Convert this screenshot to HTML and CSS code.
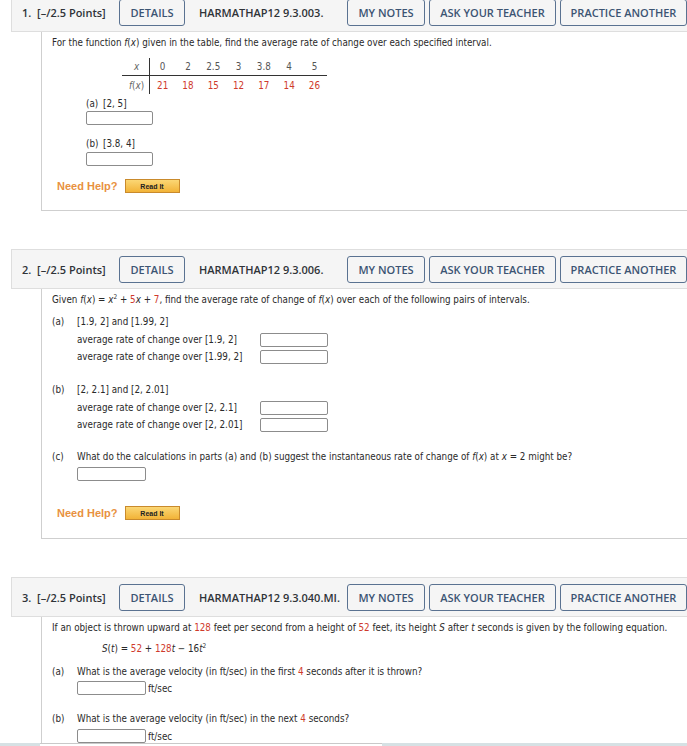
FILE: index.html
```html
<!DOCTYPE html>
<html lang="en">
<head>
<meta charset="utf-8">
<title>Questions</title>
<link rel="stylesheet" href="styles.css">
</head>
<body>
<div class="page">

<section class="q q1">
  <div class="qhead">
    <span class="qnum">1.&nbsp; [–/2.5 Points]</span>
    <span class="btn b-details">DETAILS</span>
    <span class="qid">HARMATHAP12 9.3.003.</span>
    <span class="actions">
      <span class="btn b-notes">MY NOTES</span>
      <span class="btn b-wide">ASK YOUR TEACHER</span>
      <span class="btn b-wide">PRACTICE ANOTHER</span>
    </span>
  </div>
  <div class="qbody qb1">
    <p class="line">For the function <i>f</i>(<i>x</i>) given in the table, find the average rate of change over each specified interval.</p>
    <div class="ftable">
      <div class="th"><i>x</i></div>
      <div class="td">0</div><div class="td">2</div><div class="td">2.5</div><div class="td">3</div><div class="td">3.8</div><div class="td">4</div><div class="td">5</div>
      <div class="th th2"><span><i>f</i>(<i>x</i>)</span></div>
      <div class="td red">21</div><div class="td red">18</div><div class="td red">15</div><div class="td red">12</div><div class="td red">17</div><div class="td red">14</div><div class="td red">26</div>
    </div>
    <div class="line part p1a"><span class="lbl lbl-s">(a)</span><span class="ptxt">[2, 5]</span></div>
    <input class="ans a1" type="text">
    <div class="line part p1b"><span class="lbl lbl-s">(b)</span><span class="ptxt">[3.8, 4]</span></div>
    <input class="ans a1 a1b" type="text">
    <div class="help h1"><span class="need">Need Help?</span><span class="readit">Read It</span></div>
  </div>
</section>

<section class="q q2">
  <div class="qhead">
    <span class="qnum">2.&nbsp; [–/2.5 Points]</span>
    <span class="btn b-details">DETAILS</span>
    <span class="qid">HARMATHAP12 9.3.006.</span>
    <span class="actions">
      <span class="btn b-notes">MY NOTES</span>
      <span class="btn b-wide">ASK YOUR TEACHER</span>
      <span class="btn b-wide">PRACTICE ANOTHER</span>
    </span>
  </div>
  <div class="qbody qb2">
    <p class="line">Given <i>f</i>(<i>x</i>) = <i>x</i><sup>2</sup> + <span class="red">5</span><i>x</i> + <span class="red">7</span>, find the average rate of change of <i>f</i>(<i>x</i>) over each of the following pairs of intervals.</p>
    <div class="line part p2a"><span class="lbl">(a)</span><span class="ptxt">[1.9, 2] and [1.99, 2]</span></div>
    <div class="rows r2a">
      <div class="row"><span class="rtxt">average rate of change over [1.9, 2]</span><input class="ans a2" type="text"></div>
      <div class="row"><span class="rtxt">average rate of change over [1.99, 2]</span><input class="ans a2" type="text"></div>
    </div>
    <div class="line part p2b"><span class="lbl">(b)</span><span class="ptxt">[2, 2.1] and [2, 2.01]</span></div>
    <div class="rows r2b">
      <div class="row"><span class="rtxt">average rate of change over [2, 2.1]</span><input class="ans a2" type="text"></div>
      <div class="row"><span class="rtxt">average rate of change over [2, 2.01]</span><input class="ans a2" type="text"></div>
    </div>
    <div class="line part p2c"><span class="lbl">(c)</span><span class="ptxt">What do the calculations in parts (a) and (b) suggest the instantaneous rate of change of <i>f</i>(<i>x</i>) at <i>x</i> = 2 might be?</span></div>
    <input class="ans a3 a2c" type="text">
    <div class="help h2"><span class="need">Need Help?</span><span class="readit">Read It</span></div>
  </div>
</section>

<section class="q q3">
  <div class="qhead">
    <span class="qnum">3.&nbsp; [–/2.5 Points]</span>
    <span class="btn b-details">DETAILS</span>
    <span class="qid">HARMATHAP12 9.3.040.MI.</span>
    <span class="actions">
      <span class="btn b-notes">MY NOTES</span>
      <span class="btn b-wide">ASK YOUR TEACHER</span>
      <span class="btn b-wide">PRACTICE ANOTHER</span>
    </span>
  </div>
  <div class="qbody qb3">
    <p class="line">If an object is thrown upward at <span class="red">128</span> feet per second from a height of <span class="red">52</span> feet, its height <i>S</i> after <i>t</i> seconds is given by the following equation.</p>
    <p class="line eq"><i>S</i>(<i>t</i>) = <span class="red">52</span> + <span class="red">128</span><i>t</i> − 16<i>t</i><sup>2</sup></p>
    <div class="line part p3a"><span class="lbl">(a)</span><span class="ptxt">What is the average velocity (in ft/sec) in the first <span class="red">4</span> seconds after it is thrown?</span></div>
    <div class="unitrow u3a"><input class="ans a3" type="text"><span class="unit">ft/sec</span></div>
    <div class="line part p3b"><span class="lbl">(b)</span><span class="ptxt">What is the average velocity (in ft/sec) in the next <span class="red">4</span> seconds?</span></div>
    <div class="unitrow u3b"><input class="ans a3" type="text"><span class="unit">ft/sec</span></div>
  </div>
</section>

</div>
<div class="hscroll"><div class="thumb"></div></div>
</body>
</html>
```

FILE: styles.css
```css
* { box-sizing: border-box; }
html, body { margin: 0; padding: 0; }
body {
  width: 687px;
  height: 746px;
  overflow: hidden;
  background: #fff;
  font-family: "DejaVu Sans Condensed", "DejaVu Sans", sans-serif;
  font-size: 9.75px;
  color: #2a2a2a;
}
.page { margin-top: -8px; }

.q { margin: 0 -1px 38px 11px; }
.q3 { margin-bottom: 0; }

.qhead {
  display: flex;
  align-items: center;
  height: 40px;
  padding: 1px 0 0 10px;
  background: #f5f5f5;
  border: 1px solid #dedede;
  font-family: "Open Sans", sans-serif;
}
.qnum {
  flex: none;
  width: 97px;
  font-size: 11px;
  font-weight: 600;
  color: #2f3338;
  white-space: nowrap;
}
.qid {
  flex: none;
  margin-left: 14px;
  font-size: 11px;
  font-weight: 600;
  color: #2f3338;
  white-space: nowrap;
}
.actions { margin-left: auto; display: flex; gap: 4px; flex: none; }
.btn {
  flex: none;
  display: inline-flex;
  align-items: center;
  justify-content: center;
  height: 27px;
  border: 1px solid #5a7291;
  border-radius: 3px;
  font-size: 11px;
  font-weight: 600;
  color: #3c5473;
  white-space: nowrap;
}
.b-details { width: 66px; }
.b-notes { width: 78px; }
.b-wide { width: 127px; }

.qbody {
  margin-left: 30px;
  padding: 4px 0 0 10px;
  border-left: 1px solid #cfcfcf;
  border-bottom: 1px solid #cfcfcf;
}
.qb1 { padding-bottom: 17px; }
.qb2 { padding-bottom: 18px; }
.qb3 { padding-bottom: 3px; border-bottom: 0; }

.line { margin: 0; line-height: 14px; height: 14px; white-space: nowrap; }
.red { color: #cf3a2c; }
sup { font-size: 6.5px; line-height: 0; vertical-align: 4px; }

.ftable {
  margin: 8px 0 0 70px;
  display: grid;
  grid-template-columns: 28px repeat(7, 25.3px);
  grid-auto-rows: 18px;
  width: 205px;
  color: #555;
}
.ftable > div { display: flex; align-items: center; justify-content: center; }
.ftable .th { border-right: 1px solid #333; padding-left: 2px; color: #666; }
.ftable > div:nth-child(-n+8) { border-bottom: 1px solid #333; }

.part { display: flex; }
.lbl { width: 25px; flex: none; }
.lbl-s { width: 17px; }
.p1a { margin-top: 3px; padding-left: 34px; }
.p1b { margin-top: 12px; padding-left: 34px; }
.p2a { margin-top: 8px; }
.p2b { margin-top: 18px; }
.p2c { margin-top: 17px; }
.p3a { margin-top: 9px; }
.p3b { margin-top: 17px; }
.eq { margin-top: 7px; padding-left: 50px; }

.ans {
  display: block;
  height: 14px;
  padding: 0;
  margin: 0;
  border: 1px solid #8c8c8c;
  border-radius: 2px;
  background: #fff;
  font: inherit;
}
.a1 { width: 67px; margin-left: 34px; }
.a1b { margin-top: 1px; }
.a2 { width: 68px; }
.a3 { width: 69px; }
.a2c { margin: 3px 0 0 25px; }

.rows { padding-left: 25px; }
.r2a { margin-top: 2px; }
.r2b { margin-top: 2px; }
.row { display: flex; align-items: center; height: 17px; white-space: nowrap; }
.rtxt { width: 183px; flex: none; }

.unitrow { display: flex; align-items: center; padding-left: 25px; height: 14px; }
.u3a { margin-top: 2px; }
.u3b { margin-top: 3px; }
.unit { margin-left: 2px; }

.help { display: flex; align-items: center; height: 14px; padding-left: 5px; }
.h1 { margin-top: 13px; }
.h2 { margin-top: 25px; }
.need {
  font-family: "Liberation Sans", Arial, sans-serif;
  font-weight: bold;
  font-size: 11px;
  color: #e8913f;
}
.readit {
  margin-left: 7px;
  width: 55px;
  height: 14px;
  display: inline-flex;
  align-items: center;
  justify-content: center;
  border: 1px solid #c98a2c;
  background: linear-gradient(#fbd775, #f2b337);
  font-family: "Liberation Sans", Arial, sans-serif;
  font-weight: bold;
  font-size: 7px;
  color: #222;
}

.hscroll {
  position: fixed;
  left: 0;
  right: 0;
  bottom: 0;
  height: 3px;
  background: #d6e1e4;
}
.hscroll .thumb {
  position: absolute;
  left: 40px;
  width: 342px;
  top: 0;
  bottom: 0;
  background: #fff;
  border-top: 1px solid #c9c9c9;
}
```
